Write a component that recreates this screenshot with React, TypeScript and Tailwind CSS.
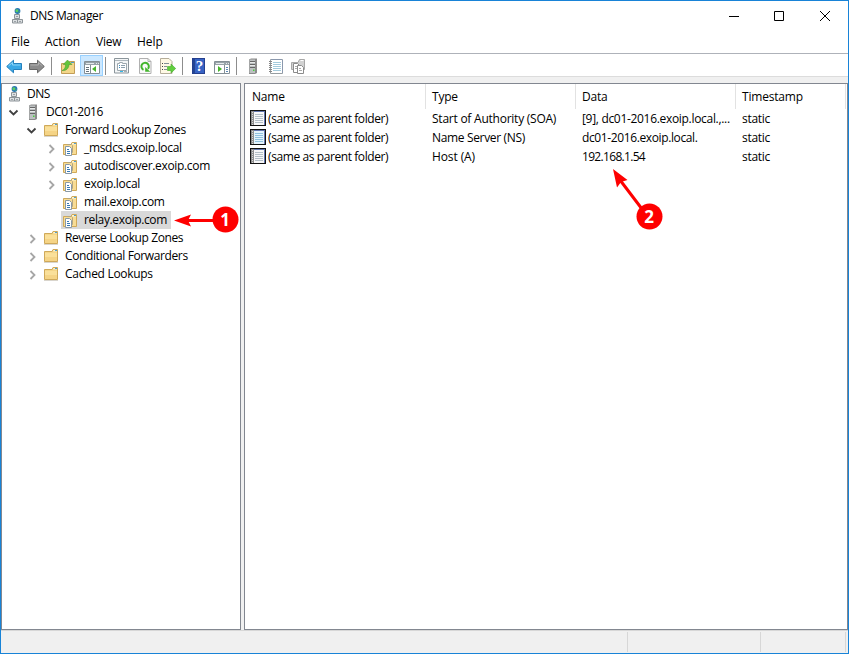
import React from 'react';

interface IconProps {
  className?: string;
}

interface TreeNode {
  label: string;
  level: number;
  icon: 'dns' | 'server' | 'folder' | 'zone';
  state?: 'open' | 'closed';
  selected?: boolean;
  tracking: string;
}

const TREE: TreeNode[] = [
  { label: 'DNS', level: 0, icon: 'dns', tracking: 'tracking-[-0.5px]' },
  { label: 'DC01-2016', level: 1, icon: 'server', state: 'open', tracking: 'tracking-[-0.5px]' },
  { label: 'Forward Lookup Zones', level: 2, icon: 'folder', state: 'open', tracking: 'tracking-[-0.38px]' },
  { label: '_msdcs.exoip.local', level: 3, icon: 'zone', state: 'closed', tracking: 'tracking-[-0.32px]' },
  { label: 'autodiscover.exoip.com', level: 3, icon: 'zone', state: 'closed', tracking: 'tracking-[-0.33px]' },
  { label: 'exoip.local', level: 3, icon: 'zone', state: 'closed', tracking: 'tracking-[-0.32px]' },
  { label: 'mail.exoip.com', level: 3, icon: 'zone', tracking: 'tracking-[-0.3px]' },
  { label: 'relay.exoip.com', level: 3, icon: 'zone', selected: true, tracking: 'tracking-[-0.36px]' },
  { label: 'Reverse Lookup Zones', level: 2, icon: 'folder', state: 'closed', tracking: 'tracking-[-0.4px]' },
  { label: 'Conditional Forwarders', level: 2, icon: 'folder', state: 'closed', tracking: 'tracking-[-0.38px]' },
  { label: 'Cached Lookups', level: 2, icon: 'folder', state: 'closed', tracking: 'tracking-[-0.3px]' },
];

const INDENT = ['pl-[4px]', 'pl-[4px]', 'pl-[22px]', 'pl-[41px]'];

const RECORDS = [
  {
    type: 'Start of Authority (SOA)',
    typeTracking: 'tracking-[-0.24px]',
    data: '[9], dc01-2016.exoip.local.,...',
    dataTracking: 'tracking-[-0.31px]',
    blue: false,
  },
  {
    type: 'Name Server (NS)',
    typeTracking: 'tracking-[-0.34px]',
    data: 'dc01-2016.exoip.local.',
    dataTracking: 'tracking-[-0.38px]',
    blue: true,
  },
  {
    type: 'Host (A)',
    typeTracking: 'tracking-[-0.1px]',
    data: '192.168.1.54',
    dataTracking: 'tracking-[-0.68px]',
    blue: false,
  },
];

const Svg = ({ className = 'w-4 h-4', children }: { className?: string; children: React.ReactNode }) => (
  <svg viewBox="0 0 16 16" className={`shrink-0 ${className}`} fill="none">
    {children}
  </svg>
);

const DnsIcon = ({ className }: IconProps) => (
  <Svg className={className}>
    <circle cx="8.5" cy="3" r="2.9" fill="#2877b4" />
    <path d="M6.5 1.5H9l.5 1.5L8 4.5 6.5 3.5zM10 3.5l1 .2-1.5 1.5z" fill="#5fd35a" />
    <path d="M5.5 6.5h5v4h-5zM3.5 11.5h5V15h-5zM8.500 11.5h5V15h-5z" fill="#dde0e2" stroke="#8d9499" />
    <path d="M7 8.5h2M5 13.5h2M10 13.5h2" stroke="#9aa1a6" />
  </Svg>
);

const ServerIcon = ({ className }: IconProps) => (
  <Svg className={className}>
    <path d="m4 1.5 2-1h6V15l-2 1H4z" fill="#8b8b8b" />
    <path d="M4.5 1.5H10V15H4.5z" fill="#bcc0c1" />
    <path d="M5 3.5h5M5 6.5h5M5 9.5h5" stroke="#666" />
    <path d="M5 4.5h5M5 7.5h5" stroke="#e7e9e9" />
    <path d="M8 11.5h1.5V13H8z" fill="#44d23b" />
  </Svg>
);

const FolderIcon = ({ className }: IconProps) => (
  <Svg className={className}>
    <path d="M1.5 3.5H9l1-2h4.5v12h-13z" fill="#edcb78" stroke="#cfa95a" />
    <path d="M10.5 2H14v1.5h-4z" fill="#fff4ce" />
    <path d="M12 2h2v1h-2z" fill="#4d9ed1" />
    <path d="M2 4.5h12V13H2z" fill="#fae09a" />
    <path d="M2 9h12v4H2z" fill="#f5d486" />
    <path d="M1 14.5h14" stroke="#d9d5cd" />
  </Svg>
);

const ZoneIcon = ({ className }: IconProps) => (
  <Svg className={className}>
    <path d="M1.5 4.5H9l1-2h4.5v12h-13z" fill="#f8dc94" stroke="#cfa95a" />
    <path d="M10 3h4v1.5h-4z" fill="#fff4ce" />
    <path d="M12 3h2v1h-2z" fill="#4d9ed1" />
    <path d="M5.5 5V4.500h4l1 1v7H9" stroke="#b3a582" />
    <path d="M3.5 6.5h4l2 2v7h-6z" fill="#fff" stroke="#8999a6" />
    <path d="M5 9.5h2M5 11.5h3M5 13.5h3" stroke="#3779b5" />
  </Svg>
);

const RecordIcon = ({ blue }: { blue: boolean }) => (
  <Svg className="w-4 h-4 -mt-px">
    <rect width="16" height="16" fill="#111" />
    <rect x="4" y="1" width="10" height="14" fill={blue ? '#e4f4fd' : '#f7f7f8'} />
    <path d="M14.5 1v14M2 1.5h13" stroke="#6275ad" />
    <path d="M1 1h3v14H1z" fill="#8d8d8d" />
    <path d="M2.5 2v13" stroke="#d5d5d5" strokeDasharray="1 1" />
    <path d="M5 4.5h8M5 6.5h8M5 8.5h8M5 10.5h8M5 12.5h8" stroke={blue ? '#8fc1df' : '#b4bfc7'} />
  </Svg>
);

const TREE_ICONS = { dns: DnsIcon, server: ServerIcon, folder: FolderIcon, zone: ZoneIcon };

const Arrow = ({ forward = false }: { forward?: boolean }) => (
  <Svg className={forward ? 'w-4 h-4 -scale-x-100' : 'w-4 h-4'}>
    <path
      d="M.7 8.5 7.5 2.2v3.3h8v6h-8v3.3z"
      fill={forward ? '#8c8c8c' : '#39a7e5'}
      stroke={forward ? '#686868' : '#2480bd'}
    />
    <path d="m2.5 8 4-3.5V7h8" stroke={forward ? '#b0b0b0' : '#8bd5fa'} />
  </Svg>
);

const UpFolderIcon = () => (
  <Svg>
    <path d="M1.5 5.5h7l1-2h5v12h-13z" fill="#f3d68a" stroke="#c39d57" />
    <path d="M11 4.5h3" stroke="#4c9fc8" />
    <path
      d="M2 12.5c3-1 3.500-3.500 3.500-6H3.200L7.500 2 12 6.5H9c0 4-3 6.5-7 6z"
      fill="#63c53b"
      stroke="#45942b"
      strokeWidth=".5"
    />
  </Svg>
);

const PaneIcon = ({ run = false }: { run?: boolean }) => (
  <Svg>
    <path d="M.5 3.5h15v12H.5z" fill="#fff" stroke="#848f96" />
    <path d="M1 4h14v3H1z" fill="#98a3a9" />
    <path d="M2 5.5h8M12 5.5h1M14 5.5h1" stroke="#e4e9eb" />
    <path d={run ? 'M10.5 7v8' : 'M6.5 7v8'} stroke="#848f96" />
    {run ? (
      <>
        <path d="M4 8v6l4-3z" fill="#48b52d" />
        <path d="M12 9.5h2M12 11.5h2M12 13.5h2" stroke="#5b88b5" />
      </>
    ) : (
      <>
        <path d="M12 8v6l-4-3z" fill="#48b52d" />
        <path d="M2 9.5h3M2 11.5h3M2 13.5h3" stroke="#67737b" />
      </>
    )}
  </Svg>
);

const PropertiesIcon = () => (
  <Svg>
    <path d="M.5.5h14V15H.5z" fill="#f4f6f7" stroke="#8b959b" />
    <path d="M1 2.5h13" stroke="#aeb8be" />
    <path d="M3.5 5.5h2v-1h3v1h4v7h-9z" fill="#fff" stroke="#9da8ae" />
    <path d="M5 7.5h1M5 9.5h1" stroke="#368bc1" />
    <path d="M7 7.5h4M7 9.5h4" stroke="#8ba0ae" />
    <path d="M6 13.5h3" stroke="#35b8e8" />
    <path d="M10 13.5h3" stroke="#a6b0b5" />
  </Svg>
);

const RefreshIcon = () => (
  <Svg>
    <path d="M2.5.5H11l3 3v12H2.500z" fill="#fafafa" stroke="#b0b0b0" />
    <path d="M11 .5v3h3" stroke="#b0b0b0" />
    <path d="M6.500 11.8a3.700 3.700 0 1 1 4.500-1" stroke="#43b52d" strokeWidth="2" />
    <path d="M8.2 9v4.800h5z" fill="#43b52d" />
  </Svg>
);

const ExportIcon = () => (
  <Svg>
    <path d="M.5.5H9l3 3v12H.5z" fill="#fff9e5" stroke="#b5ad9a" />
    <path d="M2 5.5h1M2 8.5h1M2 11.5h1" stroke="#444" />
    <path d="M4 5.5h5M4 8.5h3M4 11.5h3" stroke="#829098" />
    <path d="M7.5 8.5H11V6l4.7 4.5L11 15v-2.5H7.5z" fill="#61ce3e" stroke="#43a92e" strokeWidth=".6" />
  </Svg>
);

const HelpIcon = () => (
  <svg viewBox="0 0 16 16" className="w-4 h-4 shrink-0">
    <rect x="1.5" y=".5" width="12" height="15" fill="#3763c4" stroke="#243f8e" />
    <path d="M2 1h2v14H2z" fill="#244593" />
    <text x="8.5" y="13" textAnchor="middle" fill="#fff" fontSize="15" fontWeight="700" fontFamily="Liberation Serif, serif">?</text>
  </svg>
);

const NotebookIcon = () => (
  <Svg>
    <path d="M2.5 1.5h12v14h-12z" fill="#fff" stroke="#969da1" />
    <path d="M14.5 2v13M3 1.5h11" stroke="#8a98ad" />
    <path d="M1 3.5h3M1 5.5h3M1 7.5h3M1 9.5h3M1 11.5h3M1 13.5h3" stroke="#888" />
    <path d="M5 4.5h8M5 6.5h8M5 8.5h8M5 10.5h8M5 12.5h8" stroke="#a5cbdc" />
  </Svg>
);

const CopyZoneIcon = () => (
  <Svg>
    <path d="M1.5 4.5H8l1.500-3h5v10h-13z" fill="#d2d2d2" stroke="#a8a8a8" />
    <path d="M10.5 2.5h3" stroke="#fff" />
    <path d="M3.5 5.5h4l2 2v7h-6z" fill="#fff" stroke="#8b8b8b" />
    <path d="M7.5 7.5h4l2 2v6h-6z" fill="#fff" stroke="#8b8b8b" />
    <path d="M5 8.5h2M5 10.5h2M9 10.5h2M9 12.5h3" stroke="#aaa" />
  </Svg>
);

const Separator = ({ className = '' }: IconProps) => <div className={`w-px h-[18px] bg-[#8d8d8d] ${className}`} />;

const Chevron = ({ open }: { open: boolean }) => (
  <svg viewBox="0 0 16 18" className="w-4 h-[18px] shrink-0" fill="none">
    <path
      d={open ? 'm3.5 7.5 4 4 4-4' : 'm6.5 6 4 4-4 4'}
      stroke={open ? '#404040' : '#a6a6a6'}
      strokeWidth="1.8"
    />
  </svg>
);

const TreeRow = ({ node }: { node: TreeNode }) => {
  const Icon = TREE_ICONS[node.icon];
  return (
    <div className={`flex h-[18px] items-center ${INDENT[node.level]}`}>
      {node.level > 0 && (
        <div className="w-[18px] shrink-0">{node.state && <Chevron open={node.state === 'open'} />}</div>
      )}
      <div className={`flex h-[18px] items-center pr-[4px] ${node.selected ? 'bg-[#d9d9d9]' : ''}`}>
        <Icon className={node.level > 0 ? 'ml-px w-4 h-4' : 'w-4 h-4'} />
        <span className={`whitespace-nowrap ${node.level > 1 ? 'pl-[6px]' : 'pl-[5px]'} ${node.tracking}`}>
          {node.label}
        </span>
      </div>
    </div>
  );
};

const HeaderCell = ({ label, className }: { label: string; className: string }) => (
  <div className={`flex h-[25px] items-center border-r border-[#e2e2e2] ${className}`}>{label}</div>
);

export default function App() {
  return (
    <div className="relative flex h-[654px] w-[849px] flex-col overflow-hidden border border-[#1883d7] bg-white font-['Open_Sans','Noto_Sans',sans-serif] text-[12px] leading-[18px] text-black">
      {/* Title bar */}
      <header className="flex h-[30px] shrink-0 items-center">
        <DnsIcon className="ml-2 w-4 h-4" />
        <span className="ml-[5px] flex-1 tracking-[-0.38px]">DNS Manager</span>
        <svg viewBox="0 0 101 12" className="mr-[18px] mb-[2px] w-[101px] h-3" fill="none" stroke="#000">
          <path d="M0 7.5h10M45.5 2.500h9v9h-9zM91 2l10 10M101 2 91 12" />
        </svg>
      </header>

      {/* Menu */}
      <nav className="flex h-[22px] shrink-0 items-center pl-[10px]">
        <span className="w-[34px] tracking-[-0.1px]">File</span>
        <span className="w-[51px]">Action</span>
        <span className="w-[41px] tracking-[-0.2px]">View</span>
        <span>Help</span>
      </nav>

      {/* Toolbar */}
      <div className="flex h-[24px] shrink-0 items-center border-y border-t-[#aeb2b9] border-b-[#dcdcdc] pt-[2px] pl-[5px]">
        <Arrow />
        <div className="w-[7px]" />
        <Arrow forward />
        <Separator className="ml-[6px] mr-[8px]" />
        <UpFolderIcon />
        <div className="-mt-px ml-1 flex h-[21px] w-[23px] items-center justify-center border border-[#99d1ff] bg-[#cce8ff] pl-px">
          <PaneIcon />
        </div>
        <Separator className="ml-[2px] mr-[8px]" />
        <PropertiesIcon />
        <div className="w-[7px]" />
        <RefreshIcon />
        <div className="w-[7px]" />
        <ExportIcon />
        <Separator className="ml-[6px] mr-[8px]" />
        <HelpIcon />
        <div className="w-[7px]" />
        <PaneIcon run />
        <Separator className="ml-[6px] mr-[8px]" />
        <ServerIcon />
        <div className="w-[7px]" />
        <NotebookIcon />
        <div className="w-[6px]" />
        <CopyZoneIcon />
      </div>

      <main className="flex h-[553px] shrink-0 gap-[3px] bg-[#f0f0f0] pt-[6px]">
        <aside className="w-[240px] border border-[#828790] bg-white pt-[1px]">
          {TREE.map((node) => (
            <TreeRow key={node.label} node={node} />
          ))}
        </aside>

        <section className="flex-1 border border-[#828790] bg-white">
          <div className="flex tracking-[-0.2px]">
            <HeaderCell label="Name" className="w-[181px] pl-[7px]" />
            <HeaderCell label="Type" className="w-[150px] pl-[6px]" />
            <HeaderCell label="Data" className="w-[160px] pl-[6px]" />
            <HeaderCell label="Timestamp" className="w-[110px] pl-[6px]" />
          </div>
          {RECORDS.map((record) => (
            <div key={record.type} className="flex h-[19px] items-center whitespace-nowrap">
              <div className="flex w-[187px] items-center pl-[5px]">
                <RecordIcon blue={record.blue} />
                <span className="pl-[2px] tracking-[-0.41px]">(same as parent folder)</span>
              </div>
              <span className={`w-[150px] ${record.typeTracking}`}>{record.type}</span>
              <span className={`w-[160px] ${record.dataTracking}`}>{record.data}</span>
              <span className="tracking-[-0.3px]">static</span>
            </div>
          ))}
        </section>
      </main>

      {/* Status bar */}
      <footer className="flex flex-1 border-t border-[#d7d7d7] bg-[#f0f0f0] py-px">
        <div className="w-[627px] border-r border-[#d7d7d7]" />
        <div className="w-[133px] border-r border-[#d7d7d7]" />
        <div className="w-[85px] border-r border-[#d7d7d7]" />
      </footer>

      {/* Numbered callouts */}
      <svg viewBox="0 0 849 654" className="pointer-events-none absolute -left-px -top-px h-[654px] w-[849px] max-w-none">
        <g fill="#fe0000" stroke="#fe0000">
          <path d="M188 220.5h28M620 180l22 29" strokeWidth="3" />
          <path d="m174 220.5 17-6-3 6 3 6zM613 169l14.5 11-6.5 2-4 5.5z" stroke="none" />
          <circle cx="225.5" cy="219.5" r="13" stroke="none" />
          <circle cx="649.5" cy="216.5" r="13" stroke="none" />
        </g>
        <g fill="#fff" fontFamily="Open Sans, sans-serif" fontSize="17" fontWeight="700" textAnchor="middle">
          <text x="225" y="225.5">1</text>
          <text x="649" y="222.5">2</text>
        </g>
      </svg>
    </div>
  );
}
